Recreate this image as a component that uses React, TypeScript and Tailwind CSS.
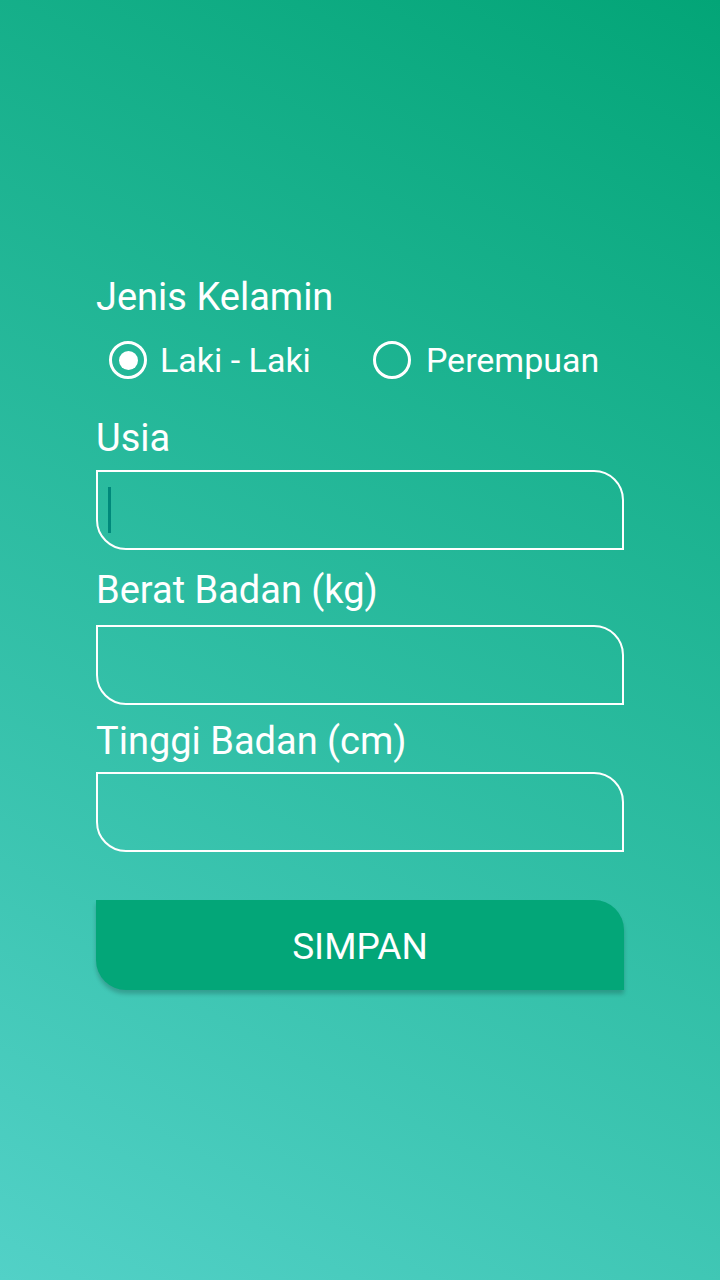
export default function App() {
  return (
    <div
      className="w-[720px] h-[1280px] bg-[linear-gradient(28deg,#52d1c7_0%,#03a577_100%)] text-white"
      style={{ fontFamily: "Roboto, 'Noto Sans', sans-serif" }}
    >
      <div className="px-[96px] pt-[277px]">
        {/* Jenis kelamin */}
        <div className="text-[38px] leading-[40px]">Jenis Kelamin</div>
        <div className="flex items-center h-[40px] mt-[23px]">
          <label className="flex items-center ml-[13px]">
            <span className="w-[38px] h-[38px] rounded-full border-[3.5px] border-white flex items-center justify-center">
              <span className="w-[19px] h-[19px] rounded-full bg-white" />
            </span>
            <span className="ml-[13px] text-[34px] leading-[40px]">Laki - Laki</span>
          </label>
          <label className="flex items-center ml-[62px]">
            <span className="w-[38px] h-[38px] rounded-full border-[3.5px] border-white" />
            <span className="ml-[15px] text-[34px] leading-[40px]">Perempuan</span>
          </label>
        </div>

        {/* Usia */}
        <div className="text-[38px] leading-[40px] mt-[38px]">Usia</div>
        <div className="mt-[12px] h-[80px] border-2 border-white rounded-tr-[30px] rounded-bl-[30px] flex items-center pl-[10px]">
          <span className="w-[3px] h-[46px] bg-[#00897b]" />
        </div>

        {/* Berat */}
        <div className="text-[38px] leading-[40px] mt-[20px]">Berat Badan (kg)</div>
        <div className="mt-[15px] h-[80px] border-2 border-white rounded-tr-[30px] rounded-bl-[30px]" />

        {/* Tinggi */}
        <div className="text-[38px] leading-[40px] mt-[16px]">Tinggi Badan (cm)</div>
        <div className="mt-[11px] h-[80px] border-2 border-white rounded-tr-[30px] rounded-bl-[30px]" />

        <button className="mt-[48px] w-full h-[90px] pt-[4px] bg-[#03a678] rounded-tr-[30px] rounded-bl-[30px] shadow-[0_4px_4px_rgba(0,0,0,0.2)] text-[37px] text-white">
          SIMPAN
        </button>
      </div>
    </div>
  );
}
